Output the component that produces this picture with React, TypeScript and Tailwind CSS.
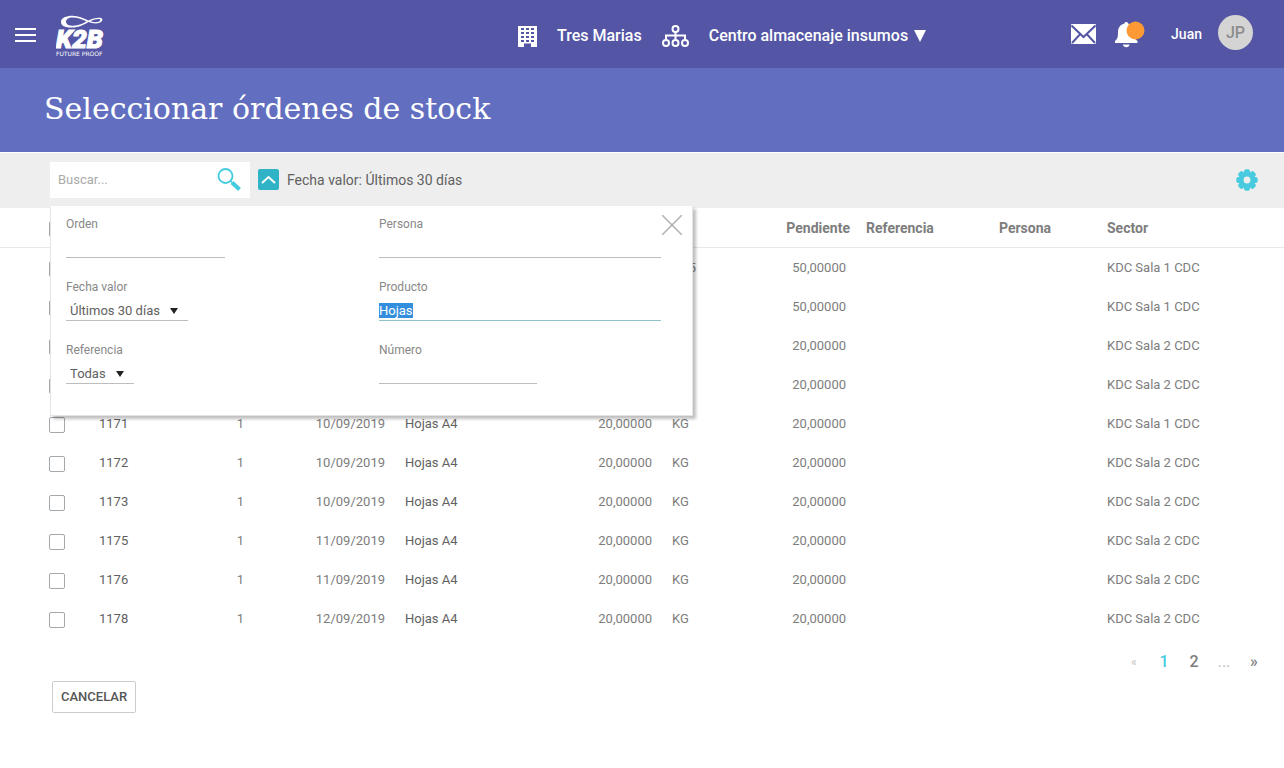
import { useEffect, useRef } from "react";
import type { ReactNode } from "react";

type Order = {
  id: string;
  line: string;
  date: string;
  product: string;
  quantity: string;
  unit: string;
  pending: string;
  sector: string;
};

const order = (id: string, date: string, amount: string, sala: number, unit = "KG"): Order => ({
  id,
  line: "1",
  date,
  product: "Hojas A4",
  quantity: amount,
  unit,
  pending: amount,
  sector: `KDC Sala ${sala} CDC`,
});

const orders: Order[] = [
  order("1167", "09/09/2019", "50,00000", 1, "KG5"),
  order("1168", "09/09/2019", "50,00000", 1),
  order("1169", "09/09/2019", "20,00000", 2),
  order("1170", "10/09/2019", "20,00000", 2),
  order("1171", "10/09/2019", "20,00000", 1),
  order("1172", "10/09/2019", "20,00000", 2),
  order("1173", "10/09/2019", "20,00000", 2),
  order("1175", "11/09/2019", "20,00000", 2),
  order("1176", "11/09/2019", "20,00000", 2),
  order("1178", "12/09/2019", "20,00000", 2),
];

function Logo() {
  return (
    <svg width="52" height="48" viewBox="0 0 52 48" role="img" aria-label="K2B Future Proof">
      <path
        transform="translate(-1 4)"
        fillRule="evenodd"
        fill="#fff"
        d="M6 7C6 3 11 .8 17.500 .8C23.500 .8 28 3 33.500 5.500C38 3.300 42 2.300 45.500 2.800C48.500 3.600 48 6.500 44.500 7.800C41 9 37 8.300 33.500 7C29 9.500 24.500 12.600 16.500 12.600C10 12.600 6 10.800 6 7ZM11 7C11.500 9.800 14.500 11 18 10.800C24 10.500 28 8.500 31.500 6.200C27.500 4.300 23 2.400 17.500 2.400C13.500 2.500 10.800 4.200 11 7ZM35.500 6.200C39 7.500 43 7.600 44.800 6C46 4.600 45 4 43.300 4C41 4 38 4.900 35.500 6.200Z"
      />
      <text x="0" y="37" fill="#fff" stroke="#fff" strokeWidth="1" fontFamily="Roboto, sans-serif" fontWeight="900" fontStyle="italic" fontSize="26">K2B</text>
      <text x="0" y="45" fill="#fff" fontFamily="DejaVu Sans, sans-serif" fontSize="6">FUTURE PROOF</text>
    </svg>
  );
}

function BuildingIcon() {
  return (
    <svg width="19" height="21" viewBox="0 0 19 21" aria-hidden="true">
      <path fill="#fff" d="M0 0h19v21h-6v-3.500h-7V21H0z" />
      <g fill="#5456a5">
        {[2, 6, 10, 14].map((y) =>
          [3, 8, 13].map((x) => <rect key={`${x}-${y}`} x={x} y={y} width="3" height="2" />),
        )}
      </g>
    </svg>
  );
}

function OrgIcon() {
  return (
    <svg width="27" height="23" viewBox="0 0 27 23" fill="none" stroke="#fff" strokeWidth="2" aria-hidden="true">
      <circle cx="13.500" cy="4" r="3" />
      <path d="M13.500 7v7M4 14v-3.500h19V14" />
      <circle cx="4" cy="18" r="3" />
      <circle cx="13.500" cy="18" r="3" />
      <circle cx="23" cy="18" r="3" />
    </svg>
  );
}

function MailIcon() {
  return (
    <svg width="25" height="20" viewBox="0 0 25 20" aria-hidden="true">
      <rect width="25" height="20" rx="1" fill="#fff" />
      <path d="M0.500 1.500L12.500 13L24.500 1.500M1 19L9.300 10M24 19L15.700 10" fill="none" stroke="#5456a5" strokeWidth="2" />
    </svg>
  );
}

function BellIcon() {
  return (
    <svg width="30" height="27" viewBox="0 0 30 27" aria-hidden="true">
      <path
        fill="#fff"
        d="M9.500 2.500C9.500 .5 13 .5 13 2.500C17.500 3.500 19.500 7 19.500 11C19.500 16 20 18 22.500 20V22H0V20C2.500 18 3 16 3 11C3 7 5 3.500 9.500 2.500ZM8 23.500h6.500C14.500 27 8 27 8 23.500Z"
      />
      <circle cx="20.500" cy="9.500" r="9" fill="#fd9a35" />
    </svg>
  );
}

function GearIcon() {
  return (
    <svg width="22" height="22" viewBox="-11 -11 22 22" aria-hidden="true">
      <g fill="#48cbdf">
        {[0, 45, 90, 135].map((a) => (
          <rect key={a} x="-3" y="-10.700" width="6" height="21.400" rx="2" transform={`rotate(${a})`} />
        ))}
        <circle r="8.300" />
      </g>
      <circle r="3.400" fill="#eee" />
    </svg>
  );
}

function Field({ id, label, children }: { id: string; label: string; children: ReactNode }) {
  return (
    <div className="flex h-[63px] flex-col items-start">
      <label htmlFor={id} className="text-xs leading-4 text-[#888]">
        {label}
      </label>
      {children}
    </div>
  );
}

const inputClass =
  "mt-[3px] h-[23px] border-b bg-transparent pt-[3px] text-[13px] text-[#555] outline-none selection:bg-[#338fdd] selection:text-white";

function Dropdown({ id, options, className }: { id: string; options: string[]; className: string }) {
  return (
    <div className={`mt-[3px] grid h-[23px] items-center border-b border-[#bdbdbd] pt-1 ${className}`}>
      <select id={id} className="col-start-1 row-start-1 w-full appearance-none bg-transparent pl-1 text-[13px] leading-4 text-[#616161] outline-none">
        {options.map((o) => (
          <option key={o}>{o}</option>
        ))}
      </select>
      <svg className="pointer-events-none col-start-1 row-start-1 mr-[10px] justify-self-end" width="8" height="6" viewBox="0 0 8 6" aria-hidden="true">
        <path d="M0 0h8L4 6z" fill="#222" />
      </svg>
    </div>
  );
}

function FilterPanel() {
  const product = useRef<HTMLInputElement>(null);
  useEffect(() => {
    product.current?.focus();
    product.current?.select();
  }, []);
  return (
    <div className="absolute top-[53px] left-[50px] z-10 flex h-[210px] w-[643px] items-start border border-[#e4e4e4] border-t-white bg-white pt-2 pr-[10px] pl-[15px] shadow-[3px_3px_3px_rgba(0,0,0,0.25)]">
      <div className="w-[313px] pt-px">
        <Field id="orden" label="Orden">
          <input id="orden" type="text" className={`${inputClass} w-[159px] border-[#bdbdbd]`} />
        </Field>
        <Field id="fecha" label="Fecha valor">
          <Dropdown id="fecha" options={["Últimos 30 días"]} className="w-[122px]" />
        </Field>
        <Field id="referencia" label="Referencia">
          <Dropdown id="referencia" options={["Todas"]} className="w-[68px]" />
        </Field>
      </div>
      <div className="flex-1 pt-px">
        <Field id="persona" label="Persona">
          <input id="persona" type="text" className={`${inputClass} w-[282px] border-[#bdbdbd]`} />
        </Field>
        <Field id="producto" label="Producto">
          <input
            id="producto"
            ref={product}
            type="text"
            defaultValue="Hojas"
            className={`${inputClass} w-[282px] border-[#8fc3c8]`}
          />
        </Field>
        <Field id="numero" label="Número">
          <input id="numero" type="text" className={`${inputClass} w-[158px] border-[#bdbdbd]`} />
        </Field>
      </div>
      <button type="button" aria-label="Cerrar">
        <svg width="20" height="20" viewBox="0 0 20 20" aria-hidden="true">
          <path d="M0 0l20 20M20 0L0 20" stroke="#b0b0b0" strokeWidth="1.500" />
        </svg>
      </button>
    </div>
  );
}

function Checkbox({ label }: { label: string }) {
  return (
    <input
      type="checkbox"
      aria-label={label}
      className="mt-[2px] block size-4 appearance-none rounded-xs border border-[#a3a8ad] bg-white"
    />
  );
}

export default function App() {
  return (
    <div className="min-h-screen bg-white font-[Roboto,sans-serif] text-[13px] text-[#7d7d7d]">
      <header className="flex h-[68px] items-center bg-[#5456a5] pr-[31px] pl-[15px] text-white">
        <div className="flex basis-[503px] items-center gap-5 pt-[2px]">
          <button type="button" aria-label="Menú" className="flex w-[21px] flex-col gap-1">
            <span className="h-[2px] bg-white" />
            <span className="h-[2px] bg-white" />
            <span className="h-[2px] bg-white" />
          </button>
          <Logo />
        </div>
        <nav className="flex items-center gap-5 pt-1 text-base font-medium">
          <BuildingIcon />
          <a href="#empresa">Tres Marias</a>
          <OrgIcon />
          <a href="#centro" className="flex items-center gap-[6px]">
            Centro almacenaje insumos
            <svg width="12" height="12" viewBox="0 0 12 12" aria-hidden="true">
              <path d="M0 0h12L6 12z" fill="#fff" />
            </svg>
          </a>
        </nav>
        <div className="ml-auto flex items-center">
          <a href="#mensajes" aria-label="Mensajes"><MailIcon /></a>
          <a href="#avisos" aria-label="Avisos" className="ml-[19px]"><BellIcon /></a>
          <span className="ml-[26px] text-sm font-medium">Juan</span>
          <span className="mb-[3px] ml-4 flex size-[35px] items-center justify-center rounded-full bg-[#d4d4d4] text-base font-medium text-[#8d8d8d]">JP</span>
        </div>
      </header>

      <div className="flex h-[84px] items-center bg-[#626fc0] pb-[2px] pl-[44px]">
        <h1 className="font-['Roboto_Slab','DejaVu_Serif',serif] text-[30px] leading-10 text-white">Seleccionar órdenes de stock</h1>
      </div>

      <div className="relative mt-px flex h-[55px] items-center bg-[#eee] pr-[26px] pb-[2px] pl-[50px]">
        <div className="flex h-9 w-[200px] items-center bg-white pr-[9px] pl-2">
          <input type="search" aria-label="Buscar" placeholder="Buscar..." className="min-w-0 flex-1 bg-transparent outline-none placeholder:text-[#aaa]" />
          <button type="button" aria-label="Buscar">
            <svg width="24" height="23" viewBox="0 0 24 23" fill="none" stroke="#43cbdf" aria-hidden="true">
              <circle cx="8.500" cy="8" r="7" strokeWidth="1.800" />
              <path d="M13.500 13l2 2" strokeWidth="1.500" />
              <path d="M15 14.500l7.500 7" strokeWidth="4" />
            </svg>
          </button>
        </div>
        <button type="button" aria-label="Ocultar filtros" className="ml-2 flex size-[21px] items-center justify-center rounded-xs bg-[#30b3c6]">
          <svg width="15" height="9" viewBox="0 0 15 9" aria-hidden="true">
            <path d="M1 8l6.500-6L14 8" fill="none" stroke="#fff" strokeWidth="2" />
          </svg>
        </button>
        <span className="ml-2 text-sm text-[#616161]">Fecha valor: Últimos 30 días</span>
        <button type="button" aria-label="Configuración" className="ml-auto">
          <GearIcon />
        </button>
        <FilterPanel />
      </div>

      <table className="w-full table-fixed border-separate border-spacing-0">
        <colgroup>
          <col className="w-[84px]" />
          <col className="w-[100px]" />
          <col className="w-[65px]" />
          <col className="w-[141px]" />
          <col className="w-[140px]" />
          <col className="w-[127px]" />
          <col className="w-[100px]" />
          <col className="w-[94px]" />
          <col className="w-[133px]" />
          <col className="w-[108px]" />
          <col />
        </colgroup>
        <thead>
          <tr className="h-10 text-left text-sm [&>th]:border-b [&>th]:border-[#e8e8e8] [&>th]:font-bold">
            <th className="pl-[49px]"><Checkbox label="Seleccionar todas" /></th>
            <th className="pl-[15px]">Orden</th>
            <th className="pr-[5px] text-right">Línea</th>
            <th className="pr-[5px] text-right">Fecha</th>
            <th className="pl-[15px]">Producto</th>
            <th className="pr-[5px] text-right">Cantidad</th>
            <th aria-label="Unidad" />
            <th className="pr-px text-right">Pendiente</th>
            <th className="pl-[15px]">Referencia</th>
            <th className="pl-[15px]">Persona</th>
            <th className="pl-[15px]">Sector</th>
          </tr>
        </thead>
        <tbody>
          {orders.map((o) => (
            <tr key={o.id} className="h-[39px]">
              <td className="pl-[49px]"><Checkbox label={`Orden ${o.id}`} /></td>
              <td className="pl-[15px] text-[#616161]">{o.id}</td>
              <td className="pr-[5px] text-right">{o.line}</td>
              <td className="pr-[5px] text-right">{o.date}</td>
              <td className="pl-[15px] text-[#616161]">{o.product}</td>
              <td className="pr-[5px] text-right">{o.quantity}</td>
              <td className="pl-[15px]">{o.unit}</td>
              <td className="pr-[5px] text-right">{o.pending}</td>
              <td />
              <td />
              <td className="pl-[15px]">{o.sector}</td>
            </tr>
          ))}
        </tbody>
      </table>

      <nav aria-label="Páginas" className="mt-2 flex h-8 items-center justify-end pr-[15px] text-base font-medium [&>*]:w-[30px] [&>*]:text-center">
        <span className="text-xs text-[#ccc]">«</span>
        <a href="#1" className="text-[#43cbdf]">1</a>
        <a href="#2">2</a>
        <span className="font-normal text-[#bbb]">...</span>
        <a href="#siguiente">»</a>
      </nav>

      <button type="button" className="mt-[3px] ml-[52px] h-8 rounded-xs border border-[#ccc] px-2 font-medium text-[#555]">
        CANCELAR
      </button>
    </div>
  );
}
